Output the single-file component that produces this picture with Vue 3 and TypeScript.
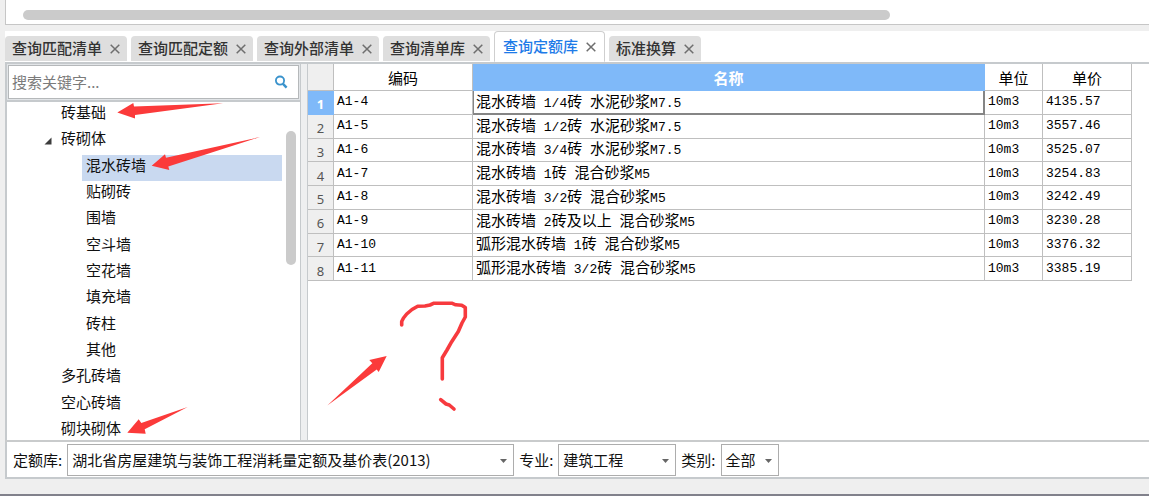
<script setup lang="ts">
import { ref } from 'vue'

interface Tab { id: number; label: string }
interface TreeNode { label: string; level: number; open?: boolean }
interface Quota { code: string; name: string; unit: string; price: string }

const tabs = ref<Tab[]>([
  { id: 1, label: '查询匹配清单' },
  { id: 2, label: '查询匹配定额' },
  { id: 3, label: '查询外部清单' },
  { id: 4, label: '查询清单库' },
  { id: 5, label: '查询定额库' },
  { id: 6, label: '标准换算' },
])
const activeTab = ref(5)

const nodes: TreeNode[] = [
  { label: '砖基础', level: 1 },
  { label: '砖砌体', level: 1, open: true },
  { label: '混水砖墙', level: 2 },
  { label: '贴砌砖', level: 2 },
  { label: '围墙', level: 2 },
  { label: '空斗墙', level: 2 },
  { label: '空花墙', level: 2 },
  { label: '填充墙', level: 2 },
  { label: '砖柱', level: 2 },
  { label: '其他', level: 2 },
  { label: '多孔砖墙', level: 1 },
  { label: '空心砖墙', level: 1 },
  { label: '砌块砌体', level: 1 },
]
const selectedNode = ref('混水砖墙')

const rows: Quota[] = [
  { code: 'A1-4', name: '混水砖墙 1/4砖 水泥砂浆M7.5', unit: '10m3', price: '4135.57' },
  { code: 'A1-5', name: '混水砖墙 1/2砖 水泥砂浆M7.5', unit: '10m3', price: '3557.46' },
  { code: 'A1-6', name: '混水砖墙 3/4砖 水泥砂浆M7.5', unit: '10m3', price: '3525.07' },
  { code: 'A1-7', name: '混水砖墙 1砖 混合砂浆M5', unit: '10m3', price: '3254.83' },
  { code: 'A1-8', name: '混水砖墙 3/2砖 混合砂浆M5', unit: '10m3', price: '3242.49' },
  { code: 'A1-9', name: '混水砖墙 2砖及以上 混合砂浆M5', unit: '10m3', price: '3230.28' },
  { code: 'A1-10', name: '弧形混水砖墙 1砖 混合砂浆M5', unit: '10m3', price: '3376.32' },
  { code: 'A1-11', name: '弧形混水砖墙 3/2砖 混合砂浆M5', unit: '10m3', price: '3385.19' },
]
const selectedRow = ref(0)
const keyword = ref('')

// Splits a name into Chinese and Latin runs, which are set in different sizes.
function runs(text: string): { text: string; han: boolean }[] {
  return (text.match(/[\u4e00-\u9fff]+|[^\u4e00-\u9fff]+/g) ?? []).map((t) => ({
    text: t,
    han: /[\u4e00-\u9fff]/.test(t),
  }))
}

function closeTab(id: number) {
  tabs.value = tabs.value.filter((t) => t.id !== id)
}
</script>

<template>
  <div class="page">
    <div class="upper"><div class="h-thumb"></div></div>

    <div class="dock">
      <nav class="tabs">
        <div v-for="t in tabs" :key="t.id" class="tab" :class="{ active: t.id === activeTab }">
          <button type="button" class="tab-label" @click="activeTab = t.id">{{ t.label }}</button>
          <button type="button" class="tab-close" :aria-label="'关闭' + t.label" @click="closeTab(t.id)">
            <svg width="10" height="10" viewBox="0 0 10 10"><path d="M.7.7 9.3 9.3M9.3.7.7 9.3" /></svg>
          </button>
        </div>
      </nav>

      <div class="body">
        <aside class="side">
          <div class="search">
            <input v-model="keyword" type="text" placeholder="搜索关键字..." aria-label="搜索关键字" />
            <button type="button" aria-label="搜索">
              <svg width="14" height="14" viewBox="0 0 14 14">
                <circle cx="6" cy="5.6" r="4.1" />
                <path d="M9 8.8 12.6 12.6" />
              </svg>
            </button>
          </div>
          <div class="tree">
            <ul>
              <li v-for="n in nodes" :key="n.label" :class="['level-' + n.level, { selected: n.label === selectedNode }]">
                <svg v-if="n.open" class="caret" width="8" height="8" viewBox="0 0 8 8"><path d="M7.5.5V7.5H.5Z" /></svg>
                <button type="button" @click="selectedNode = n.label">{{ n.label }}</button>
              </li>
            </ul>
            <div class="v-track"><div class="v-thumb"></div></div>
          </div>
        </aside>

        <main class="grid">
          <table>
            <colgroup>
              <col class="c-num" /><col class="c-code" /><col /><col class="c-unit" /><col class="c-price" />
            </colgroup>
            <thead>
              <tr>
                <th class="num"></th>
                <th>编码</th>
                <th class="current">名称</th>
                <th>单位</th>
                <th>单价</th>
              </tr>
            </thead>
            <tbody>
              <tr v-for="(r, i) in rows" :key="r.code" :class="{ picked: i === selectedRow }" @click="selectedRow = i">
                <th class="num" scope="row">{{ i + 1 }}</th>
                <td>{{ r.code }}</td>
                <td class="name"><span v-for="(p, k) in runs(r.name)" :key="k" :class="{ han: p.han }">{{ p.text }}</span></td>
                <td>{{ r.unit }}</td>
                <td>{{ r.price }}</td>
              </tr>
            </tbody>
          </table>
        </main>
      </div>

      <footer class="filters">
        <label for="lib">定额库:</label>
        <span class="select lib">
          <select id="lib"><option>湖北省房屋建筑与装饰工程消耗量定额及基价表(2013)</option></select>
          <svg width="7" height="4" viewBox="0 0 7 4"><path d="M0 0H7L3.5 4Z" /></svg>
        </span>
        <label for="major">专业:</label>
        <span class="select major">
          <select id="major"><option>建筑工程</option></select>
          <svg width="7" height="4" viewBox="0 0 7 4"><path d="M0 0H7L3.5 4Z" /></svg>
        </span>
        <label for="kind">类别:</label>
        <span class="select kind">
          <select id="kind"><option>全部</option></select>
          <svg width="7" height="4" viewBox="0 0 7 4"><path d="M0 0H7L3.5 4Z" /></svg>
        </span>
      </footer>
    </div>

    <svg class="marks" width="480" height="440" viewBox="0 0 480 440" aria-hidden="true">
      <path d="M117.3 112.4 133.3 103 134 106.6 223 103.3 135 115 135 118.6Z" />
      <path d="M151.7 165.7 165 154.3 166 157.7 260 137 168.3 166.5 169.3 170Z" />
      <path d="M127.3 432.7 138.7 419.3 141.3 423 187.7 407 144.7 429.3 145.7 433.7Z" />
      <path d="M386.7 356 369.3 360 372.3 363.3 327.3 405.6 376.7 369.6 378.7 372Z" />
      <path
        class="stroke"
        d="M401.7 325V321.5L403.5 318 406.7 314 412 309.5 417.7 306.3 425 306 430 305 434 303.2H451.7L455.7 304.8 461.7 305.2 465.3 307.5V317L462 323 458.3 331.5 451.7 341.7 447 350 442.3 357.7V379M440.7 399.7 446 404 449.3 405 454 409"
      />
    </svg>
  </div>
</template>

<style>
html,
body,
#app {
  height: 100%;
}
body {
  margin: 0;
  background: #efefef;
}
</style>

<style scoped>
.page {
  position: relative;
  display: flex;
  flex-direction: column;
  box-sizing: border-box;
  min-height: 100%;
  padding: 0 0 15px 5px;
  border-bottom: 2px solid #81818b;
  overflow: hidden;
  background: #efefef;
  color: #111;
  font: 15px/20px "Noto Sans CJK SC", sans-serif;
}
button,
input,
select {
  margin: 0;
  padding: 0;
  border: 0;
  background: none;
  color: inherit;
  font: inherit;
}
.upper {
  box-sizing: border-box;
  height: 25px;
  padding: 10px 0 0 17px;
  border: solid #c6c6c6;
  border-width: 0 0 1px 1px;
  background: #fff;
}
.h-thumb {
  width: 77%;
  height: 10px;
  border-radius: 5px;
  background: #cbcbcb;
}
.dock {
  display: flex;
  flex: 1;
  flex-direction: column;
  margin-top: 6px;
  background: #fff;
}
.tabs {
  display: flex;
  align-items: flex-end;
  gap: 4px;
  height: 31px;
  border-bottom: 2px solid #c6cacd;
}
.tab {
  display: flex;
  align-items: center;
  gap: 8px;
  box-sizing: border-box;
  height: 26px;
  padding: 0 7px;
  border-bottom: 1px solid #fff;
  border-radius: 4px 4px 0 0;
  background: #dedede;
  color: #333;
}
.tab.active {
  height: 31px;
  padding: 0 8px;
  border: 1px solid #cfcfcf;
  border-bottom-color: #fff;
  background: #fff;
  color: #1e7be8;
}
.tab-label {
  padding-bottom: 2px;
  white-space: nowrap;
  font-weight: 500;
}
.tab-close {
  display: flex;
}
.tab-close path {
  fill: none;
  stroke: #6e6e6e;
  stroke-width: 1.5;
}
.body {
  display: flex;
  flex: 1;
  min-height: 0;
  border-bottom: 2px solid #c9cbcc;
}
.side {
  display: flex;
  flex: none;
  flex-direction: column;
  width: 293px;
  border: solid #c6cacd;
  border-width: 0 1px 0 2px;
}
.search {
  display: flex;
  align-items: center;
  box-sizing: border-box;
  height: 34px;
  margin: 1px 1px 0;
  padding: 0 10px 0 3px;
  border: 1px solid #b5b8ba;
  box-shadow: 0 0 0 1px #e2e5e8;
}
.search input {
  flex: 1;
  min-width: 0;
  outline: none;
}
.search input::placeholder {
  color: #7b7b7b;
  opacity: 1;
}
.search button {
  display: flex;
}
.search svg {
  fill: none;
  stroke: #3a93cc;
  stroke-width: 1.8;
}
.search svg path {
  stroke-width: 2.4;
}
.tree {
  display: flex;
  flex: 1;
  min-height: 0;
  margin-top: 1px;
  border-top: 2px solid #c6cacd;
  overflow: hidden;
}
.tree ul {
  display: flex;
  flex: 1;
  flex-direction: column;
  margin: 0 0 -4px;
  padding: 0;
  list-style: none;
}
.tree li {
  display: flex;
  flex: 1;
  align-items: center;
  min-height: 20px;
}
.tree li button {
  padding-bottom: 6px;
}
.level-1 {
  margin-left: 50px;
  padding-left: 4px;
}
.level-2 {
  margin-left: 75px;
  padding-left: 4px;
}
.level-1:has(.caret) {
  margin-left: 37px;
  padding-left: 0;
}
.caret {
  margin-right: 9px;
  fill: #3c3c3c;
}
.selected {
  background: #c9d9f0;
}
.v-track {
  width: 18px;
  padding: 29px 4px 0;
  box-sizing: border-box;
}
.v-thumb {
  height: 134px;
  border-radius: 5px;
  background: #cbcbcb;
}
.grid {
  flex: 1;
  min-width: 0;
  margin-left: 6px;
  padding-right: 17px;
  border-left: 1px solid #c6cacd;
  box-shadow: -6px 0 0 #eeeff0;
}
table {
  width: 100%;
  height: 217px;
  table-layout: fixed;
  border-collapse: separate;
  border-spacing: 0;
  color: #000;
  font: 13px/18px "Liberation Mono", "Noto Sans CJK SC", monospace;
}
.c-num {
  width: 26px;
}
.c-code {
  width: 139px;
}
.c-unit {
  width: 58px;
}
.c-price {
  width: 89px;
}
th,
td {
  padding: 0 0 0 3px;
  border: solid #bfbfbf;
  border-width: 0 1px 1px 0;
  text-align: left;
  white-space: nowrap;
}
thead th {
  height: 27px;
  padding: 2px 0 0;
  box-sizing: border-box;
  font: 15px/20px "Noto Sans CJK SC", sans-serif;
  text-align: center;
}
thead .current {
  border-color: #7fb9f9;
  background: #7fb9f9;
  color: #fff;
  font-weight: bold;
}
.num {
  padding: 4px 0 0;
  background: #efefef;
  color: #555;
  font: 13px/18px "Noto Sans", "Noto Sans CJK SC", sans-serif;
  text-align: center;
}
.picked .num {
  background: #7fb9f9;
  border-color: #7fb9f9;
  color: #fff;
  font-weight: bold;
}
.picked .name {
  box-shadow: inset 1px 0 #858585, inset -1px -1px #858585;
  border-color: #858585;
}
.name {
  white-space: pre;
}
.han {
  font: 15px/18px "Noto Sans CJK SC", sans-serif;
}
.filters {
  display: flex;
  align-items: center;
  height: 35px;
  padding-left: 6px;
  border-left: 2px solid #c6cacd;
  border-bottom: 2px solid #c6cacd;
}
.filters label {
  margin-right: 5px;
  white-space: nowrap;
}
.select {
  position: relative;
  flex: 0 1 auto;
  box-sizing: border-box;
  height: 32px;
  margin-right: 5px;
  border: 1px solid #adadad;
}
.select select {
  width: 100%;
  height: 100%;
  padding: 0 20px 0 4px;
  appearance: none;
  outline: none;
}
.select svg {
  position: absolute;
  top: 14px;
  right: 6px;
  fill: #666;
  pointer-events: none;
}
.lib {
  width: 447px;
}
.major {
  width: 118px;
}
.kind {
  width: 58px;
}
.marks {
  position: absolute;
  top: 0;
  left: 0;
  fill: #fb3a3a;
  pointer-events: none;
}
.marks .stroke {
  fill: none;
  stroke: #f73a3e;
  stroke-width: 3.6;
  stroke-linecap: round;
  stroke-linejoin: round;
}
</style>
